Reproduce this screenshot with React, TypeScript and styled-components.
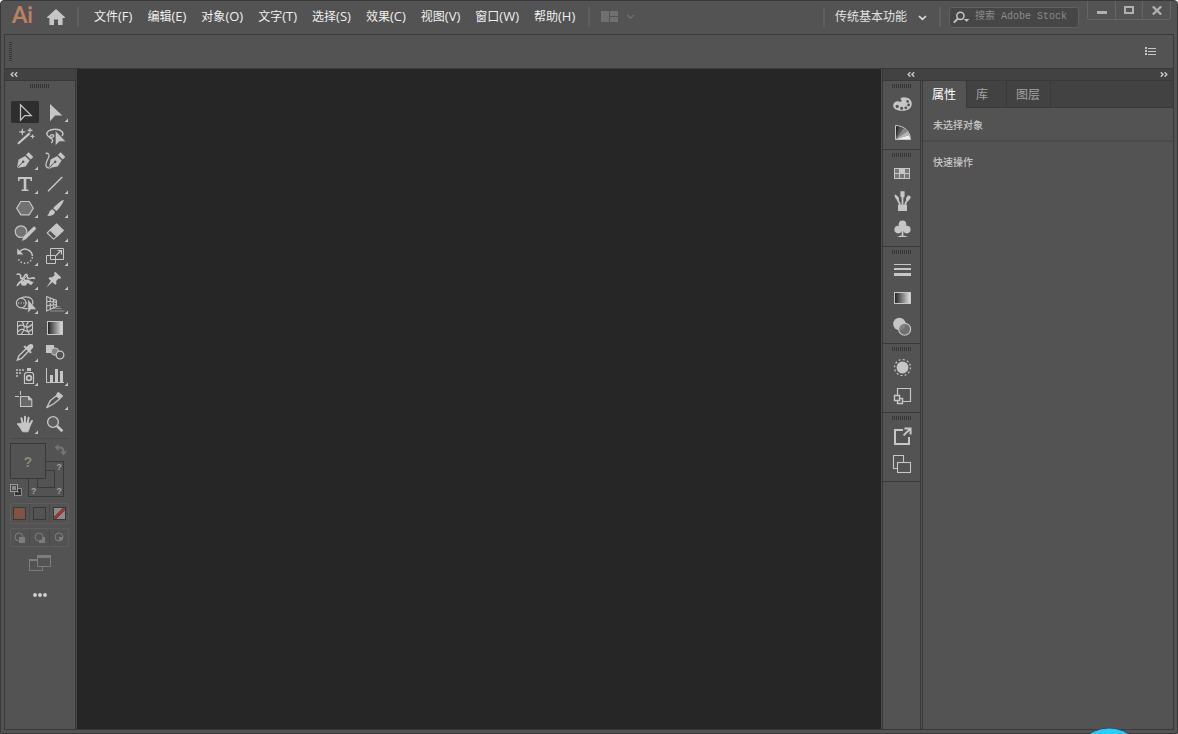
import React from "react";
import styled, { createGlobalStyle } from "styled-components";

const c = {
  bg: "#535353",
  line: "#393939",
  header: "#424242",
  canvas: "#262626",
  icon: "#c6c6c6",
  mid: "#7d7d7d",
  text: "#efefef",
};

const Global = createGlobalStyle`
  * { box-sizing: border-box; }
  html { background: #ffffff; }
  body {
    margin: 0;
    font-family: "Open Sans", "Noto Sans CJK SC", sans-serif;
    font-size: 12px;
    color: ${c.text};
  }
  button { font: inherit; color: inherit; border: 0; padding: 0; background: none; cursor: default; }
  svg { display: block; }
`;

/* ---------- window ---------- */

const Window = styled.div`
  position: relative;
  display: flex;
  flex-direction: column;
  min-height: 100vh;
  background: ${c.bg};
  border: 1px solid ${c.line};
  border-radius: 4px 4px 0 0;
`;

const TitleBar = styled.header`
  display: flex;
  align-items: flex-start;
  height: 33px;
  padding: 0 6px 0 11px;
`;

const TitleGroup = styled.div<{ $gap?: number; $left?: number }>`
  display: flex;
  align-items: center;
  height: 31px;
  gap: ${(p) => p.$gap ?? 0}px;
  margin-left: ${(p) => p.$left ?? 0}px;
`;

const Logo = styled.span`
  width: 20px;
  padding-bottom: 3px;
  font-family: Lato, "Open Sans", sans-serif;
  font-size: 22px;
  font-weight: 700;
  line-height: 28px;
  color: #bc825f;
`;

const Separator = styled.span`
  width: 2px;
  height: 20px;
  background: #5f5f5f;
`;

const Menu = styled.nav`
  display: flex;
  margin-left: 7px;
`;

const MenuItem = styled.button`
  padding: 0 7px 0 8px;
  line-height: 20px;
  white-space: nowrap;
`;

const MenuKey = styled.span`
  font-size: 13px;
`;

const Spacer = styled.div`
  flex: 1;
`;

const WorkspaceButton = styled.button`
  display: flex;
  align-items: center;
  gap: 11px;
  margin: 0 12px 0 10px;
  line-height: 20px;
  color: #e2e2e2;
  white-space: nowrap;
`;

const SearchBox = styled.label`
  display: flex;
  align-items: center;
  width: 130px;
  height: 21px;
  margin-left: 8px;
  margin-top: 2px;
  padding-left: 3px;
  gap: 5px;
  background: #464646;
  border: 1px solid #606060;
  border-radius: 3px;
`;

const SearchInput = styled.input`
  flex: 1;
  min-width: 0;
  height: 18px;
  padding: 0 0 2px;
  border: 0;
  outline: 0;
  background: none;
  color: ${c.text};
  font-family: "Liberation Mono", "Noto Sans CJK SC", monospace;
  font-size: 10px;
  &::placeholder { color: #8b8b8b; opacity: 1; }
`;

const WindowButtons = styled.div`
  display: flex;
  height: 19px;
  margin-left: 8px;
  border: 1px solid #656565;
  border-top: 0;
  border-radius: 0 0 3px 3px;
`;

const WindowButton = styled.button`
  display: grid;
  place-items: center;
  width: 27px;
  height: 18px;
  & + & { border-left: 1px solid #656565; }
  &:last-child { width: 28px; }
`;

/* ---------- frame ---------- */

const Frame = styled.div`
  flex: 1;
  display: flex;
  flex-direction: column;
  margin: 0 3px 3px;
  border: 1px solid ${c.line};
`;

const ControlBar = styled.div`
  display: flex;
  align-items: center;
  justify-content: space-between;
  height: 34px;
  padding: 0 17px 1px 4px;
  border-bottom: 1px solid ${c.line};
`;

const BarGrip = styled.span`
  width: 3px;
  height: 19px;
  background: repeating-linear-gradient(to bottom, #363636 0 1px, transparent 1px 2px);
`;

const Body = styled.div`
  flex: 1;
  display: flex;
`;

const StripHeader = styled.div`
  display: flex;
  align-items: center;
  justify-content: space-between;
  height: 12px;
  padding: 0 5px;
  background: ${c.header};
  border-bottom: 1px solid ${c.line};
`;

const Grip = styled.span`
  display: block;
  width: 19px;
  height: 4px;
  background: repeating-linear-gradient(to right, #363636 0 1px, transparent 1px 2px);
`;

const Canvas = styled.main`
  flex: 1;
  background: ${c.canvas};
`;

/* ---------- tools ---------- */

const ToolPanel = styled.aside`
  display: flex;
  flex-direction: column;
  width: 72px;
  border-right: 1px solid #454545;
  box-shadow: inset -1px 0 0 ${c.line};
  padding-right: 1px;
`;

const ToolBody = styled.div`
  padding: 3px 5px 0;
  & > ${Grip} { margin-left: 20px; }
`;

const ToolGrid = styled.div`
  display: grid;
  grid-template-columns: repeat(2, 30px);
  grid-auto-rows: 24px;
  place-items: center;
  margin-top: 12px;
  padding-bottom: 2px;
  border-bottom: 1px solid #4a4a4a;
`;

const Tool = styled.button<{ $active?: boolean }>`
  width: 28px;
  height: 22px;
  border-radius: 2px;
  background: ${(p) => (p.$active ? "#2e2e2e" : "transparent")};
`;

const Proxy = styled.div`
  position: relative;
  height: 54px;
  margin-top: 4px;
`;

const StrokeBox = styled.button`
  position: absolute;
  left: 18px;
  top: 18px;
  width: 36px;
  height: 36px;
  border: 1px solid ${c.line};
  font-family: "Liberation Mono", monospace;
  font-size: 9px;
  font-weight: 700;
  line-height: 9px;
  color: #a0a0a0;
`;

const StrokeHole = styled.span`
  position: absolute;
  inset: 8px;
  border: 1px solid ${c.line};
`;

const Mark = styled.span<{ $top?: boolean; $left?: boolean }>`
  position: absolute;
  ${(p) => (p.$left ? "left: 2px;" : "right: 1px;")}
  ${(p) => (p.$top ? "top: 2px;" : "bottom: -1px;")}
`;

const FillBox = styled.button`
  position: absolute;
  left: 0;
  top: 0;
  width: 36px;
  height: 36px;
  padding-top: 3px;
  border: 1px solid ${c.line};
  background: ${c.bg};
  font-family: "Liberation Mono", monospace;
  font-size: 14px;
  font-weight: 700;
  color: #8a8a76;
`;

const SwapButton = styled.button`
  position: absolute;
  left: 44px;
  top: 0;
`;

const DefaultButton = styled.button`
  position: absolute;
  left: 0;
  top: 41px;
`;

const ButtonRow = styled.div<{ $gap: number; $height: number }>`
  display: grid;
  grid-template-columns: 18px 20px 19px;
  width: 59px;
  height: ${(p) => p.$height}px;
  margin-top: ${(p) => p.$gap}px;
  border: 1px solid #5d5d5d;
  border-radius: 2px;
`;

const RowButton = styled.button`
  display: flex;
  align-items: center;
  padding-left: 2px;
  & + & { border-left: 1px solid #4a4a4a; padding-left: 3px; }
  svg { margin-left: 1px; }
`;

const Swatch = styled.span<{ $fill: string }>`
  width: 13px;
  height: 13px;
  border: 1px solid ${c.line};
  background: ${(p) => p.$fill};
`;

const LooseButton = styled.button<{ $gap: number }>`
  display: block;
  margin: ${(p) => p.$gap}px auto 0;
`;

/* ---------- right side ---------- */

const RightSide = styled.aside`
  display: flex;
  flex-direction: column;
  width: 292px;
  border-left: 1px solid #4b4b4b;
  box-shadow: inset 1px 0 0 ${c.line};
  padding-left: 1px;
`;

const RightHeader = styled(StripHeader)`
  padding: 0 5px 0 24px;
`;

const RightBody = styled.div`
  flex: 1;
  display: flex;
  gap: 1px;
`;

const Dock = styled.div`
  width: 38px;
  border-right: 1px solid ${c.line};
`;

const DockGroup = styled.div`
  display: flex;
  flex-direction: column;
  align-items: center;
  padding: 3px 0;
  border-bottom: 1px solid ${c.line};
`;

const DockIcons = styled.div`
  padding-top: 2px;
`;

const DockButton = styled.button`
  display: block;
  width: 28px;
  height: 28px;
`;

const Panel = styled.section`
  flex: 1;
  border-left: 1px solid ${c.line};
`;

const Tabs = styled.div`
  display: flex;
  height: 27px;
  background: ${c.header};
  box-shadow: inset 0 -1px 0 ${c.line};
`;

const Tab = styled.button<{ $active?: boolean }>`
  min-width: 40px;
  padding: 0 10px 0 9px;
  border-right: 1px solid ${c.line};
  line-height: 26px;
  text-align: left;
  color: ${(p) => (p.$active ? "#ffffff" : "#a3a3a3")};
  background: ${(p) => (p.$active ? c.bg : "transparent")};
`;

const PanelRow = styled.h2<{ $divided?: boolean }>`
  margin: 0;
  padding: 9px 10px 7px;
  font-size: 10px;
  font-weight: 500;
  line-height: 16px;
  color: #c6c6c6;
  border-bottom: ${(p) => (p.$divided ? "2px solid #4b4b4b" : "0")};
  & + & { padding-top: 12px; }
`;

const Orb = styled.svg`
  position: absolute;
  right: 30px;
  bottom: -1px;
`;

/* ---------- icons ---------- */

const Chevrons = ({ flip }: { flip?: boolean }) => (
  <svg width="8" height="5" viewBox="0 0 8 5" fill="none" stroke={c.icon} strokeWidth="1.5">
    <path d={flip ? "M.8.3 3 2.5.8 4.7M4.6.3 6.8 2.5 4.6 4.7" : "M3.4.3 1.2 2.5 3.4 4.7M7.2.3 5 2.5 7.2 4.7"} />
  </svg>
);

const Cursor = ({ d }: { d: string }) => <path d={d} fill={c.icon} stroke={c.bg} strokeWidth=".5" />;

const RampBox = ({ id, x, y, w, h }: { id: string; x: number; y: number; w: number; h: number }) => (
  <g>
    <defs>
      <linearGradient id={id}>
        <stop offset="0" stopColor="#1f1f1f" />
        <stop offset="1" stopColor="#e4e4e4" />
      </linearGradient>
    </defs>
    <rect x={x} y={y} width={w} height={h} fill={`url(#${id})`} stroke={c.icon} />
  </g>
);

const Nib = ({ x = 0 }: { x?: number }) => (
  <g transform={`translate(${x} 0)`}>
    <path d="M6 19 7.6 10.5 14.2 7 18.6 11.6 14.6 17.4Z" fill={c.icon} />
    <path d="M15 5.8 17.6 3.2 22.3 8 19.7 10.6Z" fill={c.icon} />
    <path d="M6.4 18.6 11.8 13" stroke={c.bg} strokeWidth="1" />
    <circle cx="12.2" cy="12.7" r="1.2" fill={c.bg} />
  </g>
);

type ToolDef = { name: string; more?: boolean; art: React.ReactNode };

const tools: ToolDef[] = [
  { name: "选择工具", art: <path d="M9.5 3.8V19.2L13.8 14.6H20.3Z" fill="none" stroke={c.icon} strokeWidth="1.2" /> },
  { name: "直接选择工具", more: true, art: <path d="M9 3V20.3L14.2 14.6H21.3Z" fill={c.icon} /> },
  {
    name: "魔棒工具",
    art: (
      <g stroke={c.icon} fill={c.icon}>
        <path d="M7 18.8 18.6 8.4" strokeWidth="2.2" />
        <path d="M11.3 3.6V10.2M8 6.9H14.6" strokeWidth="1" />
        <path d="M11.3 5 13 6.9 11.3 8.8 9.6 6.9Z" stroke="none" />
        <path d="M19 3V7.8M16.6 5.4H21.4M21.5 9.4V13.4M19.5 11.4H23.5" strokeWidth="1.1" />
      </g>
    ),
  },
  {
    name: "套索工具",
    art: (
      <g fill="none" stroke={c.icon} strokeWidth="1.4">
        <path d="M21 11C23.4 8.2 20.6 4.2 14 4.3 8 4.4 5.2 7 6 9.6 6.8 12 10 13.2 12 12 13.6 10.9 12.2 9.2 10.4 9.8 8.6 10.4 8 12.8 9.8 13.4 12 14 12.4 16.4 10.2 18" />
        <Cursor d="M14.4 5.8V20.8L18.4 16.4H24.8Z" />
      </g>
    ),
  },
  { name: "钢笔工具", more: true, art: <Nib /> },
  {
    name: "曲率工具",
    art: (
      <g fill="none">
        <path d="M4.6 4.4C7.4 3.6 9 6 7.4 9 5.6 12.4 4 14.8 5.2 17.4 6 19 8 19.2 10 18.6" stroke={c.icon} strokeWidth="1.3" />
        <Nib x={2} />
      </g>
    ),
  },
  { name: "文字工具", more: true, art: <path d="M7 4H21V8H19.4V6H15.3V16.6H17.4V18H10.6V16.6H12.7V6H8.6V8H7Z" fill={c.icon} /> },
  { name: "直线段工具", more: true, art: <path d="M7 18.2 21.2 4" stroke={c.icon} strokeWidth="1.5" /> },
  { name: "多边形工具", more: true, art: <path d="M9.8 4.5H18.2L22.3 11.2 18.2 17.8H9.8L5.7 11.2Z" fill="#727272" stroke={c.icon} strokeWidth="1.2" /> },
  {
    name: "画笔工具",
    more: true,
    art: (
      <g fill={c.icon}>
        <path d="M22.6 3C23.6 4 17 13.4 15.2 14L12.2 11.2C13.2 9.6 21.6 2 22.6 3Z" />
        <path d="M11.4 12.2 14 14.8C13.6 18 9.6 19.6 6 18.6 8.6 17.4 7.8 13 11.4 12.2Z" />
      </g>
    ),
  },
  {
    name: "Shaper 工具",
    more: true,
    art: (
      <g>
        <circle cx="10" cy="10.6" r="5.8" fill="#727272" stroke={c.icon} strokeWidth="1.2" />
        <path d="M10.6 20.2 12 15.8 22.2 5.8C23.8 4.8 26 6.8 24.8 8.4L14.8 18.4Z" fill={c.icon} stroke={c.bg} strokeWidth=".4" />
      </g>
    ),
  },
  {
    name: "橡皮擦工具",
    more: true,
    art: (
      <g stroke={c.icon} strokeWidth="1.1" strokeLinejoin="round">
        <path d="M15.6 2.8 22.4 9.4 16.4 15.2 9.4 8.6Z" fill={c.icon} />
        <path d="M9 9.2 6.2 12 12.6 18.2 15.8 15.4Z" fill="none" />
      </g>
    ),
  },
  {
    name: "旋转工具",
    more: true,
    art: (
      <g fill="none" stroke={c.icon} strokeWidth="1.5">
        <path d="M8.8 6.6C13 1.8 20.8 4.6 21.4 11" />
        <path d="M21.3 12C20.4 20 8.4 20.6 6.9 12.4" strokeDasharray="1.4 2" />
        <path d="M6.2 3.4V9.4H12.4Z" fill={c.icon} stroke="none" />
      </g>
    ),
  },
  {
    name: "比例缩放工具",
    more: true,
    art: (
      <g fill="none" stroke={c.icon}>
        <path d="M9.5 10V3.5H22.5V14.5H14.5M5.5 10.5H14.5V18.5H5.5ZM9.5 10.5V14.5H14.5" />
        <path d="M15 10.5 20 5.8M16.6 5.5H20.5V9.4" strokeWidth="1.2" />
      </g>
    ),
  },
  {
    name: "宽度工具",
    more: true,
    art: (
      <g fill="none" stroke={c.icon} strokeWidth="1.4">
        <path d="M5.6 5.4C8.4 4.2 10.4 6 9.6 8.4 9.2 10.2 12 9.6 13 8 13.8 6.6 14.2 5 15.6 5.4 17 6 15.6 8.2 17 9.2 19 10.4 21.4 7.6 24 9.6" strokeWidth="1.6" />
        <path d="M5.4 16.8C7.4 12.6 9.6 10.8 13 10.8L17 10.6C19.6 11.4 20.4 13.4 22.8 12.8L20.2 16.2 16.6 14 14.6 16.8 10.8 16.6 9.6 13.4 7 16.8Z" fill={c.icon} stroke="none" />
        <path d="M6 17.2 17 5.8" strokeWidth="1" />
        <circle cx="12.2" cy="11.2" r="1.2" fill={c.bg} />
      </g>
    ),
  },
  {
    name: "操控变形工具",
    more: true,
    art: (
      <g fill={c.icon}>
        <path d="M14.2 2.8 20.2 8.6 19 10 17.6 9.4 15.2 12 15.4 14.8 14.2 15.8 7.4 9.4 8.6 8.2 11.4 8.2 13.8 5.8 13 4.2Z" />
        <path d="M10 11.4 11.6 13 5.4 18.4Z" />
      </g>
    ),
  },
  {
    name: "形状生成器工具",
    more: true,
    art: (
      <g fill="none" stroke={c.icon} strokeWidth="1.2">
        <circle cx="10.2" cy="10" r="4.8" />
        <path d="M9.8 5.4C11.4 3.6 17.8 3 20.6 5.8 22.4 7.8 22.2 11.6 20.4 13.6M11.4 14.8C13 15.8 15 15.8 16.8 15.4" />
        <path d="M7 10H16" strokeDasharray="1.2 1.4" />
        <Cursor d="M16.8 6.2V20L20 16.4H25.6Z" />
      </g>
    ),
  },
  {
    name: "透视网格工具",
    more: true,
    art: (
      <g fill="none" stroke={c.icon} strokeWidth="1.1">
        <path d="M5.7 3.6V18L15.4 13.6V7.4ZM9.2 5.2V16.4M12.4 6.4V15M5.7 8.2 15.4 9.4M5.7 12.8 15.4 11.6" />
        <path d="M16 13.5H18.5M13 15.5H20.5M9 18H23.5" stroke="#8f8f8f" strokeWidth="1.2" />
      </g>
    ),
  },
  {
    name: "网格工具",
    art: (
      <g fill="none" stroke={c.icon}>
        <path d="M6.5 4.5H21.5V17.5H6.5Z" />
        <path d="M11 4.5C14 8 14 13 10 17.5M17.5 4.5C14.5 8 15.5 13 18.5 17.5M6.5 10C9 6.5 12 8.4 14 9.6 17 11.4 19 9.4 21.5 7.2M6.5 15.2C9 11.4 12 12 14 13.6 16.6 15.4 19 14.6 21.5 12" strokeWidth="1.2" />
      </g>
    ),
  },
  { name: "渐变工具", art: <RampBox id="tool-ramp" x={6.5} y={4.5} w={15} h={13} /> },
  {
    name: "吸管工具",
    more: true,
    art: (
      <g>
        <path d="M15.4 7.4 7.8 14.8 6.4 19 10.6 17.4 17.8 10" fill="none" stroke={c.icon} strokeWidth="1.4" />
        <path d="M12.4 5.8 14 4.4 15.8 6C17.6 3 20 2.2 21.6 3.6 23.2 5.2 22.2 7.8 19.4 9.4L20.8 11.2 19.4 12.6Z" fill={c.icon} />
      </g>
    ),
  },
  {
    name: "混合工具",
    art: (
      <g>
        <rect x="5" y="4" width="8" height="8" fill={c.icon} />
        <circle cx="14" cy="10.6" r="3.7" fill="#858585" stroke={c.icon} strokeWidth="1" />
        <circle cx="19" cy="14" r="3.8" fill={c.bg} stroke={c.icon} strokeWidth="1.3" />
      </g>
    ),
  },
  {
    name: "符号喷枪工具",
    more: true,
    art: (
      <g fill="none" stroke={c.icon}>
        <path d="M5 5H13M5 8H11M5 11H8" stroke="#a5a5a5" strokeWidth="2" strokeDasharray="2 1" />
        <path d="M15 7.5H21L22.5 9V18.5H13.5V9Z" strokeWidth="1.2" />
        <rect x="16" y="3" width="4" height="3" fill={c.icon} stroke="none" />
        <circle cx="18" cy="13" r="2.4" strokeWidth="1.6" />
      </g>
    ),
  },
  {
    name: "柱形图工具",
    more: true,
    art: <path d="M5 3H6V17H23V18H5ZM9 10H12V17H9ZM14 4H17V17H14ZM19 6H22V17H19Z" fill={c.icon} />,
  },
  {
    name: "画板工具",
    art: (
      <g fill="none" stroke={c.icon}>
        <path d="M9.5 2V6M4 7.5H8" />
        <path d="M9.5 7.5H17.6L20.8 10.6V17.5H9.5Z" fill="#686868" strokeWidth="1.1" />
        <path d="M17.5 7.5V10.8H20.8" fill={c.icon} />
      </g>
    ),
  },
  {
    name: "切片工具",
    more: true,
    art: (
      <g stroke={c.icon} strokeLinejoin="round">
        <path d="M5.8 18.6 9.4 11.4 15.4 6.8 18.8 9.8 12.8 14.8Z" fill="none" strokeWidth="1.3" />
        <path d="M15.4 5.8 17.2 3.2 21.8 7 19.6 9.2Z" fill={c.icon} />
      </g>
    ),
  },
  {
    name: "抓手工具",
    more: true,
    art: (
      <g fill="none" stroke={c.icon} strokeWidth="2" strokeLinecap="round">
        <path d="M10.4 5.2 12 11M14 3.8V11M17.6 4.8 16.4 11M20.9 8 18.4 12.8M7 11 10.4 13.8" />
        <path d="M10.6 10H18.8C19.4 13 18.4 15.8 17 18.8H11.6C10.4 16.4 8.4 14 7 11.6Z" fill={c.icon} strokeWidth=".8" />
      </g>
    ),
  },
  {
    name: "缩放工具",
    art: (
      <g fill="none" stroke={c.icon}>
        <circle cx="12" cy="9" r="5.4" strokeWidth="1.4" fill="#5c5c5c" />
        <path d="M16 13 21.4 18.2" strokeWidth="2.6" />
      </g>
    ),
  },
];

const dockGroups: ToolDef[][] = [
  [
    {
      name: "颜色",
      art: (
        <g>
          <path d="M14.6 7.4C20 6.8 23.8 9.8 23.8 13.8 23.8 18.2 19.6 20.8 14.6 20.8 9 20.8 5.2 18.8 5.2 15.4 5.2 12.4 8.4 10.4 10.6 11.4 12.8 12.4 14.8 11.4 13 9.8 12 8.8 12.6 7.6 14.6 7.4Z" fill={c.icon} />
          <g fill={c.bg}>
            <circle cx="19.6" cy="11.4" r="1.3" />
            <circle cx="20.6" cy="15" r="1.4" />
            <circle cx="17.8" cy="17.8" r="1.4" />
            <circle cx="13.6" cy="18.2" r="1.5" />
            <circle cx="9.2" cy="16.4" r="1.6" />
          </g>
        </g>
      ),
    },
    {
      name: "颜色参考",
      art: (
        <g>
          <path d="M7.5 7.5V21.5L11.4 8.1Z" fill="#2e2e2e" />
          <path d="M11.4 8.1 7.5 21.5 15.6 10.2Z" fill="#555" />
          <path d="M15.6 10.2 7.5 21.5 19.2 13.2Z" fill="#858585" />
          <path d="M19.2 13.2 7.5 21.5 21.4 17Z" fill="#b5b5b5" />
          <path d="M21.4 17 7.5 21.5H22.4Z" fill="#eeeeee" />
          <path d="M7.5 7.5C16 7.5 22.4 13.4 22.4 21.5H7.5Z" fill="none" stroke={c.icon} />
        </g>
      ),
    },
  ],
  [
    {
      name: "色板",
      art: (
        <g>
          <rect x="6" y="9" width="16" height="11" fill={c.icon} />
          <path d="M7 10H11V14H7ZM17 10H21V14H17ZM7 15H11V19H7ZM12 15H16V19H12ZM17 15H21V19H17Z" fill="#777" />
        </g>
      ),
    },
    {
      name: "画笔",
      art: (
        <g fill={c.icon}>
          <path d="M10 17.5H19V24H10Z" />
          <path d="M12.2 17.6 9.2 12M14.5 17.6V9M16.8 17.6 20 12" stroke={c.icon} strokeWidth="1.8" />
          <path d="M6.6 7.6C9 8 11.6 10.6 11 13 8.4 13.2 6.6 11 6.6 7.6ZM12.4 4.2H16.6V9.4L14.5 11 12.4 9.4ZM18 11.2 19.8 8.6C21.6 8 23.2 9.4 22.6 11L20.6 13.8C18.6 14.2 17.8 12.8 18 11.2Z" />
        </g>
      ),
    },
    {
      name: "符号",
      art: (
        <g fill={c.icon}>
          <circle cx="14.5" cy="9.4" r="3.8" />
          <circle cx="10.2" cy="14.6" r="3.8" />
          <circle cx="18.8" cy="14.6" r="3.8" />
          <path d="M13.6 10H15.4V20.4C15.4 20.8 19.6 20.8 19.6 22H9.4C9.4 20.8 13.6 20.8 13.6 20.4ZM12 12.6H17V15.6H12Z" />
        </g>
      ),
    },
  ],
  [
    { name: "描边", art: <path d="M6 8H23V9H6ZM6 12H23V14H6ZM6 17H23V20H6Z" fill={c.icon} /> },
    { name: "渐变", art: <RampBox id="dock-ramp" x={6.5} y={8.5} w={16} h={11} /> },
    {
      name: "透明度",
      art: (
        <g>
          <circle cx="11.4" cy="12" r="6.2" fill={c.icon} />
          <circle cx="16.6" cy="17.2" r="6" fill="#757575" fillOpacity=".85" stroke={c.icon} strokeWidth="1.1" />
        </g>
      ),
    },
  ],
  [
    {
      name: "外观",
      art: (
        <g>
          <circle cx="14.5" cy="14.5" r="5.9" fill={c.icon} />
          <circle cx="14.5" cy="14.5" r="8" fill="none" stroke={c.icon} strokeWidth="1.2" strokeDasharray="2 2.19" />
        </g>
      ),
    },
    {
      name: "图形样式",
      art: (
        <g fill="none" stroke={c.icon}>
          <path d="M9.5 14V7.5H22.5V20.5H15" strokeWidth="1.2" />
          <path d="M6.5 14.5H11.5V19.5H6.5Z" strokeWidth="1.4" />
          <path d="M12 17.5H14.5V22.5H9.5V20" strokeWidth="1.4" />
        </g>
      ),
    },
  ],
  [
    {
      name: "资源导出",
      art: (
        <g fill="none" stroke={c.icon} strokeWidth="2">
          <path d="M15 8H7V22H21V15" />
          <path d="M15.6 13.4 21.8 7.2M16.4 6.4H22.6V12.6" />
        </g>
      ),
    },
    {
      name: "画板",
      art: (
        <g fill="none" stroke={c.icon} strokeWidth="1.1">
          <path d="M9.5 18.5H5.5V5.5H15.5V12" />
          <rect x="9.5" y="12.5" width="13" height="10" />
        </g>
      ),
    },
  ],
];

const menus = [
  ["文件", "F"],
  ["编辑", "E"],
  ["对象", "O"],
  ["文字", "T"],
  ["选择", "S"],
  ["效果", "C"],
  ["视图", "V"],
  ["窗口", "W"],
  ["帮助", "H"],
];

export default function App() {
  return (
    <>
      <Global />
      <Window>
        <TitleBar>
          <TitleGroup>
            <Logo>Ai</Logo>
          </TitleGroup>
          <TitleGroup $gap={12} $left={15}>
            <button aria-label="主页">
              <svg width="18" height="16" viewBox="0 0 18 16">
                <path d="M9 0 18 8.2V9H15.6V16H11V10.6H7V16H2.4V9H0V8.2Z" fill={c.icon} />
              </svg>
            </button>
            <Separator />
          </TitleGroup>
          <TitleGroup>
            <Menu>
              {menus.map(([label, key]) => (
                <MenuItem key={key}>
                  {label}
                  <MenuKey>({key})</MenuKey>
                </MenuItem>
              ))}
            </Menu>
          </TitleGroup>
          <TitleGroup $gap={11} $left={6}>
            <Separator />
            <button aria-label="排列文档">
              <svg width="34" height="12" viewBox="0 0 34 12">
                <path d="M0 0H8V11H0ZM9 0H17V5H9ZM9 6H17V11H9Z" fill="#707070" />
                <path d="M26 4 29.5 7 33 4" fill="none" stroke="#707070" strokeWidth="1.5" />
              </svg>
            </button>
          </TitleGroup>
          <Spacer />
          <TitleGroup>
            <Separator />
            <WorkspaceButton>
              传统基本功能
              <svg width="9" height="9" viewBox="0 0 9 9">
                <path d="M1 4 4.5 7.4 8 4" fill="none" stroke="#dcdcdc" strokeWidth="1.6" />
              </svg>
            </WorkspaceButton>
            <Separator />
            <SearchBox>
              <svg width="17" height="13" viewBox="0 0 17 13" fill="none" stroke={c.icon} strokeWidth="1.5">
                <circle cx="7.4" cy="4.8" r="3.6" />
                <path d="M4.8 7.6.8 11.6" strokeWidth="1.9" />
                <path d="M10.8 8H16.4L13.6 10.8Z" fill={c.icon} stroke="none" />
              </svg>
              <SearchInput type="text" aria-label="搜索 Adobe Stock" placeholder="搜索 Adobe Stock" />
            </SearchBox>
          </TitleGroup>
          <WindowButtons>
            <WindowButton aria-label="最小化">
              <svg width="10" height="10" viewBox="0 0 10 10">
                <rect y="6" width="10" height="3" fill="#b0b0b0" />
              </svg>
            </WindowButton>
            <WindowButton aria-label="最大化">
              <svg width="10" height="8" viewBox="0 0 10 8">
                <rect x="1" y="1" width="8" height="6" fill="none" stroke="#b0b0b0" strokeWidth="2" />
              </svg>
            </WindowButton>
            <WindowButton aria-label="关闭">
              <svg width="10" height="9" viewBox="0 0 10 9">
                <path d="M.8.4 9.2 8.6M9.2.4.8 8.6" stroke="#b0b0b0" strokeWidth="2.2" />
              </svg>
            </WindowButton>
          </WindowButtons>
        </TitleBar>

        <Frame>
          <ControlBar>
            <BarGrip />
            <button aria-label="面板菜单">
              <svg width="11" height="8" viewBox="0 0 11 8">
                <path d="M0 0H2V2H0ZM0 3H2V5H0ZM0 6H2V8H0ZM3 1H11V2H3ZM3 4H11V5H3ZM3 7H11V8H3Z" fill={c.icon} />
              </svg>
            </button>
          </ControlBar>

          <Body>
            <ToolPanel>
              <StripHeader>
                <button aria-label="折叠工具栏"><Chevrons /></button>
              </StripHeader>
              <ToolBody>
                <Grip />
                <ToolGrid>
                  {tools.map((t, i) => (
                    <Tool key={t.name} $active={i === 0} aria-label={t.name}>
                      <svg width="28" height="22" viewBox="0 0 28 22">
                        {t.art}
                        {t.more && <path d="M27 17.6V21H23.6Z" fill={c.icon} />}
                      </svg>
                    </Tool>
                  ))}
                </ToolGrid>

                <Proxy>
                  <StrokeBox aria-label="描边">
                    <StrokeHole />
                    <Mark $top>?</Mark>
                    <Mark $left>?</Mark>
                    <Mark>?</Mark>
                  </StrokeBox>
                  <FillBox aria-label="填色">?</FillBox>
                  <SwapButton aria-label="互换填色和描边">
                    <svg width="13" height="13" viewBox="0 0 13 13">
                      <path d="M3 4.5H6C8.4 4.5 9.5 5.6 9.5 9" fill="none" stroke="#767676" strokeWidth="1.8" />
                      <path d="M4.4 1V8L.6 4.5ZM6 8.4H13L9.5 12.4Z" fill="#767676" />
                    </svg>
                  </SwapButton>
                  <DefaultButton aria-label="默认填色和描边">
                    <svg width="12" height="12" viewBox="0 0 12 12">
                      <rect x="4.5" y="4.5" width="7" height="7" fill="#353535" stroke="#8c8c8c" />
                      <rect x="6.5" y="6.5" width="3" height="3" fill={c.bg} stroke="#2c2c2c" />
                      <rect x=".5" y=".5" width="7" height="7" fill="#8a8a8a" stroke="#9b9b9b" />
                      <rect x="1.5" y="1.5" width="5" height="5" fill="none" stroke="#444" />
                    </svg>
                  </DefaultButton>
                </Proxy>

                <ButtonRow $gap={6} $height={21}>
                  <RowButton aria-label="颜色"><Swatch $fill="#7f5442" /></RowButton>
                  <RowButton aria-label="渐变"><Swatch $fill={c.bg} /></RowButton>
                  <RowButton aria-label="无">
                    <Swatch $fill="linear-gradient(135deg, #8c8c8c 0 38%, #8d3b3b 38% 62%, #8c8c8c 62%)" />
                  </RowButton>
                </ButtonRow>

                <ButtonRow $gap={4} $height={19}>
                  <RowButton aria-label="正常绘图">
                    <svg width="12" height="12" viewBox="0 0 12 12">
                      <circle cx="5" cy="5" r="4" fill="none" stroke={c.mid} />
                      <path d="M5 5H11V11H5Z" fill={c.mid} />
                    </svg>
                  </RowButton>
                  <RowButton aria-label="背面绘图">
                    <svg width="12" height="12" viewBox="0 0 12 12">
                      <path d="M5 5H11V11H5Z" fill={c.mid} />
                      <circle cx="5" cy="5" r="4" fill={c.bg} stroke={c.mid} />
                    </svg>
                  </RowButton>
                  <RowButton aria-label="内部绘图">
                    <svg width="12" height="12" viewBox="0 0 12 12">
                      <circle cx="5" cy="5" r="4" fill="none" stroke={c.mid} />
                      <path d="M5 5H9A4 4 0 0 1 5 9Z" fill={c.mid} />
                    </svg>
                  </RowButton>
                </ButtonRow>

                <LooseButton $gap={8} aria-label="更改屏幕模式">
                  <svg width="22" height="16" viewBox="0 0 22 16">
                    <path d="M.5 4.5H13.5V15.5H.5Z" fill={c.bg} stroke={c.mid} />
                    <path d="M0 4H14V6H0Z" fill={c.mid} />
                    <path d="M8.5.5H21.5V11.5H8.5Z" fill={c.bg} stroke={c.mid} />
                    <path d="M8 0H22V3H8Z" fill={c.mid} />
                  </svg>
                </LooseButton>
                <LooseButton $gap={22} aria-label="编辑工具栏">
                  <svg width="14" height="4" viewBox="0 0 14 4" fill="#d2d2d2">
                    <circle cx="2" cy="2" r="1.9" />
                    <circle cx="7" cy="2" r="1.9" />
                    <circle cx="12" cy="2" r="1.9" />
                  </svg>
                </LooseButton>
              </ToolBody>
            </ToolPanel>

            <Canvas />

            <RightSide>
              <RightHeader>
                <button aria-label="展开面板"><Chevrons /></button>
                <button aria-label="折叠面板"><Chevrons flip /></button>
              </RightHeader>
              <RightBody>
                <Dock>
                  {dockGroups.map((group, i) => (
                    <DockGroup key={i}>
                      <Grip />
                      <DockIcons>
                        {group.map((d) => (
                          <DockButton key={d.name} aria-label={d.name}>
                            <svg width="28" height="28" viewBox="0 0 28 28">{d.art}</svg>
                          </DockButton>
                        ))}
                      </DockIcons>
                    </DockGroup>
                  ))}
                </Dock>
                <Panel>
                  <Tabs role="tablist">
                    <Tab role="tab" aria-selected="true" $active>属性</Tab>
                    <Tab role="tab" aria-selected="false">库</Tab>
                    <Tab role="tab" aria-selected="false">图层</Tab>
                  </Tabs>
                  <PanelRow $divided>未选择对象</PanelRow>
                  <PanelRow>快速操作</PanelRow>
                </Panel>
              </RightBody>
            </RightSide>
          </Body>
        </Frame>

        <Orb width="76" height="7" viewBox="0 0 76 7" aria-hidden="true">
          <circle cx="38" cy="37" r="36" fill="#1fd3f6" stroke="#2f4a80" />
        </Orb>
      </Window>
    </>
  );
}
